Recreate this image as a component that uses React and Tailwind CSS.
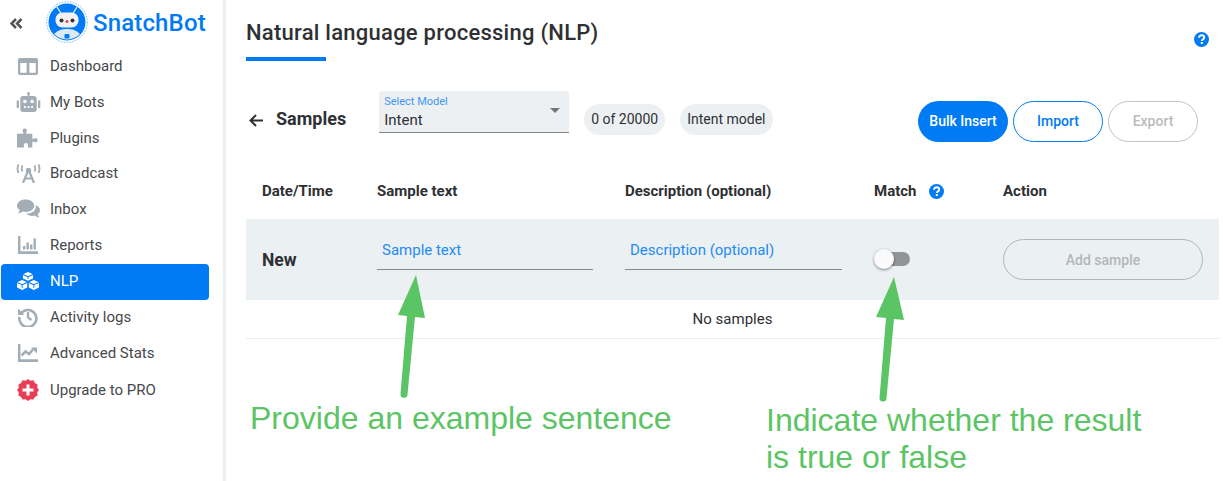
import React from "react";

const G = "#a3adb5";
const Ic = {
  dash: (c) => <svg width="20" height="17" viewBox="0 0 22 18.700"><path fillRule="evenodd" fill={c} d="M2 0h18a2 2 0 0 1 2 2v14.700a2 2 0 0 1-2 2H2a2 2 0 0 1-2-2V2a2 2 0 0 1 2-2zM2.500 5.500v10.700h7V5.500zM12.500 5.500v10.700h7V5.500z"/></svg>,
  bot: (c) => <svg width="25" height="20" viewBox="0 0 26 22"><path fill={c} fillRule="evenodd" d="M13 0a1.700 1.700 0 0 1 1 3v1.500h5a3 3 0 0 1 3 3V19a3 3 0 0 1-3 3H7a3 3 0 0 1-3-3V7.500a3 3 0 0 1 3-3h5V3a1.700 1.700 0 0 1 1-3zM9 8.500a2 2 0 1 0 0 4 2 2 0 0 0 0-4zm8 0a2 2 0 1 0 0 4 2 2 0 0 0 0-4zM8 15.500v2h2v-2zm4 0v2h2v-2zm4 0v2h2v-2z"/><rect x="0" y="9" width="2.500" height="9" rx="1.200" fill={c}/><rect x="23.500" y="9" width="2.500" height="9" rx="1.200" fill={c}/></svg>,
  plug: (c) => <svg width="23" height="20" viewBox="0 0 24 20"><path fill={c} d="M0 5.500h6.500V3.800a2.200 2.200 0 1 1 3.200 0v1.700h6.300v5.300h1.800a2.200 2.200 0 1 1 0 3.200H16V20h-4.500v-2a2.200 2.200 0 1 0-4.300 0v2H0z"/></svg>,
  cast: (c) => <svg width="25" height="19" viewBox="0 0 25 19" fill="none" stroke={c} strokeWidth="2.200"><circle cx="12.500" cy="6.500" r="2.700" fill={c} stroke="none"/><path d="M11.500 8 7 19M13.500 8 18 19M9 14.500h7"/><path d="M2.500.5Q.5 4.500 2.500 9M6.500 1.500Q5 4.500 6.500 7.500M22.500.5q2 4 0 8.500M18.500 1.500q1.500 3 0 6" strokeWidth="1.800"/></svg>,
  inbox: (c) => <svg width="23" height="20" viewBox="0 0 24 20"><path fill={c} d="M9 0c5 0 9 2.800 9 6.500S14 13 9 13c-1 0-2-.1-2.900-.4C4.700 13.700 3 14.300 1 14.500c1-1 1.700-2.100 2-3.400C1.100 9.900 0 8.300 0 6.500 0 2.800 4 0 9 0z"/><path fill={c} d="M19.500 6c2.700.9 4.500 2.800 4.500 5.200 0 1.700-.9 3.100-2.400 4.200.3 1.300 1 2.500 2 3.600-2-.2-3.800-1-5.100-2.100-.8.200-1.600.3-2.500.3-2.700 0-5-1-6.400-2.500 5.800.2 11-3 9.900-8.700z"/></svg>,
  rep: (c) => <svg width="20" height="18" viewBox="0 0 20 18"><path fill={c} d="M0 0h2.400v15.300H20V18H0z"/><path fill={c} d="M5 10h2.400v3.500H5zM8.500 6.500h2.400v7H8.500zM12 8.500h2.400v5H12zM15.500 2.500h2.400v11h-2.400z"/></svg>,
  nlp: (c) => <svg width="22" height="18" viewBox="0 0 20 18" preserveAspectRatio="none"><path fill={c} d="M10 0l4.600 2.200v4.300L10 8.700 5.400 6.500V2.200zM4.700 8l4.600 2.200v5.300L4.700 18 0 15.500v-5.300zM15.300 8l4.700 2.200v5.300L15.300 18l-4.600-2.500v-5.300z"/><path stroke="#007bf5" strokeWidth="1" fill="none" d="M5.400 2.500 10 4.700l4.600-2.200M10 4.700v2M0 10.500l4.700 2.300 4.600-2.300M4.700 12.800v3M10.700 10.500l4.600 2.300L20 10.500M15.300 12.800v3"/></svg>,
  log: (c) => <svg width="20" height="20" viewBox="0 0 20 20" fill="none"><path stroke={c} strokeWidth="2.600" d="M3 6.500A8.500 8.500 0 1 1 1.500 10"/><path fill={c} d="M0 1.500l6.500 6.500H0z"/><path stroke={c} strokeWidth="2.400" d="M10 5v5.500l3.500 2.500"/></svg>,
  adv: (c) => <svg width="20" height="18" viewBox="0 0 20 18"><path fill={c} d="M0 0h2.400v15.300H20V18H0z"/><path stroke={c} strokeWidth="2.600" fill="none" d="M3.500 11.500 7.500 7.500l3.500 2.500 4-4.500"/><path fill={c} d="M13 3.500h6v6z"/></svg>,
  pro: () => <svg width="22" height="22" viewBox="0 0 22 22"><path fill="#e83f56" d="M11 0l2.500 1.700 3-.4 1.400 2.700 2.700 1.400-.4 3L22 11l-1.800 2.500.4 3-2.700 1.400-1.400 2.700-3-.4L11 22l-2.500-1.800-3 .4-1.400-2.700-2.700-1.400.4-3L0 11l1.800-2.500-.4-3L4.100 4l1.400-2.700 3 .4z"/><path fill="#fff" d="M9.500 5.500h3v4h4v3h-4v4h-3v-4h-4v-3h4z"/></svg>,
};

const items = [
  ["Dashboard", Ic.dash, 47],
  ["My Bots", Ic.bot, 83],
  ["Plugins", Ic.plug, 119],
  ["Broadcast", Ic.cast, 154],
  ["Inbox", Ic.inbox, 190],
  ["Reports", Ic.rep, 226],
  ["NLP", Ic.nlp, 264],
  ["Activity logs", Ic.log, 298],
  ["Advanced Stats", Ic.adv, 334],
  ["Upgrade to PRO", Ic.pro, 371],
];

const Help = ({ className }) => (
  <svg className={className} width="15" height="15" viewBox="0 0 15 15">
    <circle cx="7.500" cy="7.500" r="7.500" fill="#007bf5" />
    <path d="M5 5.800C5 4.300 6.100 3.300 7.600 3.300S10.200 4.200 10.200 5.500 9.300 7.100 8.500 7.700C8 8.100 7.800 8.400 7.800 9" stroke="#fff" strokeWidth="1.900" fill="none" />
    <rect x="6.800" y="10" width="2" height="2" fill="#fff" />
  </svg>
);

function Logo() {
  return (
    <svg width="42" height="42" viewBox="0 0 42 42">
      <circle cx="21" cy="21" r="20.300" fill="none" stroke="#3f9cf5" strokeWidth="0.700" strokeDasharray="1.600 1.200" />
      <circle cx="21" cy="21" r="18.500" fill="#007bf5" />
      <path d="M11 6l5 8M31 6l-5 8" stroke="#e8eef3" strokeWidth="1.400" />
      <rect x="9.500" y="11.500" width="23" height="15" rx="7" fill="#f2f2f2" />
      <circle cx="15.500" cy="19.500" r="2" fill="#333" />
      <circle cx="26.500" cy="19.500" r="2" fill="#333" />
      <circle cx="21" cy="20.500" r="1.500" fill="#e83f56" />
      <path d="M8 33c4-4 8-5 13-5s9 1 13 5a18 18 0 0 1-26 0z" fill="#dbe9f5" />
      <rect x="18.500" y="33" width="5" height="4.500" rx="1" fill="#007bf5" />
    </svg>
  );
}

const Arrow = ({ className, d }) => (
  <svg className={className} width="50" height="135" viewBox="0 0 50 135">
    <path d={d} fill="#5bc465" />
  </svg>
);

export default function App() {
  return (
    <div className="relative flex h-[481px] w-[1223px] overflow-hidden bg-white text-[14px] text-[#2f3033]" style={{ fontFamily: "Roboto, sans-serif" }}>
      <aside className="relative h-full w-[226px] shrink-0 border-r-[3px] border-[#eceff1]">
        <div className="flex h-[45px] items-center">
          <svg className="ml-[10px] mt-[1px]" width="13" height="11" viewBox="0 0 13 11" fill="none" stroke="#555" strokeWidth="2.500"><path d="M6 1 1.500 5.500 6 10M11.500 1 7 5.500 11.500 10" /></svg>
          <div className="ml-[23px] mt-[-1px]"><Logo /></div>
          <span className="ml-[5px] text-[24px] font-medium leading-none tracking-[0.15px] text-[#007bf5]">SnatchBot</span>
        </div>
        <nav className="absolute inset-x-0 top-[1px]">
          {items.map(([label, Icon, top]) => {
            const active = label === "NLP";
            return (
              <div key={label} style={{ top: active ? top - 1 : top }} className={`absolute left-[1px] flex h-[36px] w-[208px] items-center rounded-[4px] ${active ? "bg-[#007bf5] pb-[2px] text-white" : "text-[#46484c]"}`}>
                <span className="flex w-[49px] justify-center pl-[5px]">{Icon(active ? "#fff" : G)}</span>
                <span className="text-[15px]">{label}</span>
              </div>
            );
          })}
        </nav>
      </aside>

      <main className="relative min-w-0 flex-1 pl-[20px]">
        <h1 className="mt-[19px] text-[22px] font-medium leading-[28px] tracking-[0.25px] text-[#2f3033]">Natural language processing (NLP)</h1>
        <div className="mt-[10px] h-[4px] w-[80px] bg-[#007bf5]" />
        <Help className="absolute right-[14px] top-[32px]" />

        <div className="mt-[30px] flex h-[51px] items-start">
          <svg className="ml-[3px] mt-[23px]" width="14" height="13" viewBox="0 0 14 13" fill="none" stroke="#2f3033" strokeWidth="2"><path d="M14 6.500H2M7 1 1.500 6.500 7 12" /></svg>
          <span className="ml-[13px] mt-[17px] text-[18px] font-bold leading-[22px]">Samples</span>
          <div className="relative ml-[33px] h-[42px] w-[190px] rounded-t-[4px] border-b border-[#85888c] bg-[#ecf0f3] pl-[5px]">
            <div className="mt-[4px] text-[11px] leading-[13px] text-[#3f96f5]">Select Model</div>
            <div className="mt-[3px] text-[15px] leading-[18px]">Intent</div>
            <span className="absolute right-[9px] top-[17px] h-0 w-0 border-x-[5px] border-t-[5px] border-x-transparent border-t-[#757575]" />
          </div>
          <span className="ml-[15px] mt-[13px] flex h-[31px] items-center rounded-full bg-[#ecf0f3] px-[7px] text-[14px]">0 of 20000</span>
          <span className="ml-[15px] mt-[13px] flex h-[31px] items-center rounded-full bg-[#ecf0f3] px-[7px] text-[14px]">Intent model</span>
          <div className="ml-auto mr-[25px] mt-[10px] flex items-center gap-[5px] text-[14px] font-medium">
            <button className="h-[41px] w-[90px] rounded-[21px] bg-[#007bf5] text-white">Bulk Insert</button>
            <button className="h-[41px] w-[90px] rounded-[21px] border border-[#007bf5] text-[#007bf5]">Import</button>
            <button className="h-[41px] w-[90px] rounded-[21px] border border-[#c0c2c4] text-[#b9bbbd]">Export</button>
          </div>
        </div>

        <div className="mt-[21px] grid h-[56px] w-[973px] grid-cols-[115px_248px_249px_129px_1fr] items-center pl-[16px] text-[15px] font-bold">
          <span>Date/Time</span>
          <span>Sample text</span>
          <span>Description (optional)</span>
          <span className="flex items-center">Match<Help className="ml-[13px]" /></span>
          <span>Action</span>
        </div>

        <div className="grid h-[81px] w-[973px] grid-cols-[115px_248px_249px_129px_1fr] items-center bg-[#ebf0f3] pl-[16px]">
          <span className="mt-[2px] text-[17.500px] font-bold">New</span>
          <div className="mb-[20px] mr-[32px] h-[40px] border-b border-[#85888c] pl-[5px] pt-[10px] text-[15px] leading-[20px] text-[#1f8bf5]">Sample text</div>
          <div className="mb-[20px] h-[40px] w-[217px] border-b border-[#85888c] pl-[5px] pt-[10px] text-[15px] leading-[20px] text-[#1f8bf5]">Description (optional)</div>
          <div className="relative mb-[1px] h-[20px]">
            <span className="absolute left-[3px] top-[3px] h-[14px] w-[33px] rounded-full bg-[#929597]" />
            <span className="absolute left-0 top-0 h-[20px] w-[20px] rounded-full bg-[#fafafa] shadow-[0_1px_3px_rgba(0,0,0,0.45)]" />
          </div>
          <button className="h-[41px] w-[200px] rounded-[21px] border border-[#b3b6b8] pt-[1px] text-[14px] font-medium text-[#b3b6b8]">Add sample</button>
        </div>

        <div className="flex h-[39px] w-[973px] items-center justify-center border-b border-[#e6eef0] text-[15px]">No samples</div>

        <p className="absolute left-[24px] top-[400px] text-[32px] leading-[37px] text-[#5bc465]" style={{ fontFamily: '"Liberation Sans", sans-serif' }}>Provide an example sentence</p>
        <p className="absolute left-[540px] top-[402px] text-[32px] leading-[37px] text-[#5bc465]" style={{ fontFamily: '"Liberation Sans", sans-serif' }}>Indicate whether the result<br />is true or false</p>

        <Arrow className="absolute left-[164px] top-[270px]" d="M26 5 35 48 25 47 17.500 124.500A3.500 3.500 0 0 1 10.500 124L17 46 8 45z" />
        <Arrow className="absolute left-[644px] top-[270px]" d="M24 7 34 50 24 49 16.500 128A3.500 3.500 0 0 1 9.500 128L16 48 6 47z" />
      </main>
    </div>
  );
}
